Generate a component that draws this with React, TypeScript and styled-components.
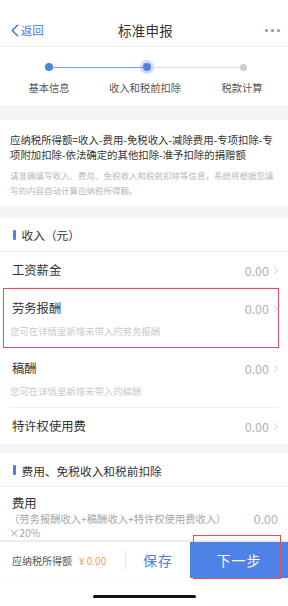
import React from 'react';
import styled, {createGlobalStyle} from 'styled-components';

const GlobalStyle = createGlobalStyle`
    html, body {
        margin: 0;
        padding: 0;
        background: #ffffff;
    }
    body {
        font-family: "Noto Sans CJK SC", "Noto Sans", sans-serif;
        color: #333333;
    }
`;

const BLUE = '#4f82e6';
const GRAY_BG = '#f4f5f7';

const Page = styled.div`
    width: 288px;
    height: 606px;
    display: flex;
    flex-direction: column;
    overflow: hidden;
    background: #ffffff;
`;

const Scroll = styled.div`
    flex: 1;
    overflow: hidden;
    background: ${GRAY_BG};
    display: flex;
    flex-direction: column;
`;

const Header = styled.div`
    background: #ffffff;
    padding-top: 14px;
`;

const NavBar = styled.div`
    height: 32px;
    display: grid;
    grid-template-columns: 1fr auto 1fr;
    align-items: center;
    border-bottom: 1px solid #ececec;
    padding: 0 8px 0 11px;
`;

const BackLink = styled.div`
    display: flex;
    align-items: center;
    gap: 2px;
    color: #3d7be0;
    font-size: 11.5px;
`;

const Title = styled.div`
    font-size: 13.5px;
    color: #333333;
    letter-spacing: 0.3px;
`;

const MoreDots = styled.div`
    justify-self: end;
    display: flex;
    gap: 3px;

    & span {
        width: 3px;
        height: 3px;
        border-radius: 50%;
        background: #7d95c9;
    }
`;

const Steps = styled.div`
    background: #ffffff;
    padding: 16px 0 10px;
`;

const Track = styled.div`
    display: flex;
    align-items: center;
    padding: 0 41px 0 45px;
`;

const Dot = styled.span<{$state: 'done' | 'current' | 'todo'}>`
    width: ${(p) => (p.$state === 'todo' ? 7 : 8)}px;
    height: ${(p) => (p.$state === 'todo' ? 7 : 8)}px;
    border-radius: 50%;
    flex: none;
    background: ${(p) => (p.$state === 'todo' ? '#c9cbd1' : BLUE)};
    box-shadow: ${(p) => (p.$state === 'current' ? '0 0 0 3px rgba(79, 130, 230, 0.28)' : 'none')};
`;

const Line = styled.span<{$active: boolean}>`
    flex: 1;
    height: 1px;
    background: ${(p) => (p.$active ? '#7ea3ea' : '#dcdde2')};
`;

const StepLabels = styled.div`
    display: grid;
    grid-template-columns: 96px 96px 98px;
    padding-left: 1px;
    margin-top: 10px;
`;

const StepLabel = styled.div`
    text-align: center;
    font-size: 10.3px;
    line-height: 14px;
    color: #555555;
`;

const Formula = styled.div`
    background: #ffffff;
    margin-top: 15px;
    padding: 12px 10px 8px;
`;

const FormulaText = styled.div`
    font-size: 10.4px;
    line-height: 15px;
    color: #333333;
`;

const FormulaHint = styled.div`
    margin-top: 6px;
    font-size: 8.5px;
    line-height: 15px;
    color: #b8b8b8;
`;

const Section = styled.div<{$gap: number}>`
    background: #ffffff;
    margin-top: ${(p) => p.$gap}px;
`;

const SectionTitle = styled.div<{$height: number}>`
    box-sizing: border-box;
    height: ${(p) => p.$height}px;
    display: flex;
    align-items: center;
    gap: 6px;
    padding-left: 13px;
    border-bottom: 1px solid #efefef;
    font-size: 11.7px;
    color: #333333;

    &::before {
        content: '';
        width: 2.5px;
        height: 10px;
        border-radius: 1px;
        background: ${BLUE};
    }
`;

const Row = styled.div<{$highlight?: boolean; $last?: boolean}>`
    position: relative;
    padding: 0 10px 0 12px;
    min-height: 36px;
    display: flex;
    flex-direction: column;
    justify-content: center;

    &::before {
        content: '';
        position: absolute;
        left: 10px;
        right: 10px;
        bottom: 0;
        height: 1px;
        background: ${(p) => (p.$last ? 'transparent' : '#efefef')};
    }

    &::after {
        content: '';
        display: ${(p) => (p.$highlight ? 'block' : 'none')};
        position: absolute;
        left: 3px;
        right: 9px;
        top: 0;
        bottom: 0;
        border: 1px solid #e0505c;
    }
`;

const RowWithHint = styled(Row)`
    padding-top: 11px;
    padding-bottom: 10px;
`;

const RowLine = styled.div`
    display: flex;
    align-items: center;
    justify-content: space-between;
    height: 18px;
`;

const RowLabel = styled.span`
    font-size: 12.3px;
    color: #333333;
`;

const RowValue = styled.span`
    display: flex;
    align-items: center;
    gap: 5px;
    font-size: 12.5px;
    color: #b3b3b3;
`;

const RowHint = styled.div`
    margin-top: 7px;
    font-size: 9.4px;
    line-height: 14px;
    color: #cacaca;
    margin-left: -2px;
`;

const CostRow = styled.div`
    padding: 7px 10px 0 12px;
`;

const CostBody = styled.div`
    display: flex;
    align-items: flex-start;
    justify-content: space-between;
    margin-left: -3px;
`;

const CostFormula = styled.div`
    width: 222px;
    font-size: 10.3px;
    line-height: 14px;
    color: #a6a6a6;
`;

const CostValue = styled.span`
    font-size: 12.5px;
    line-height: 14px;
    color: #b3b3b3;
`;

const BottomBar = styled.div`
    position: relative;
    z-index: 1;
    height: 36px;
    flex: none;
    display: flex;
    align-items: stretch;
    background: #ffffff;
    box-shadow: 0 -1px 3px rgba(0, 0, 0, 0.08);
`;

const Taxable = styled.div`
    width: 113px;
    padding-left: 12px;
    display: flex;
    align-items: center;
    gap: 7px;
    font-size: 10px;
    color: #555555;

    & b {
        font-weight: normal;
        color: #f0a04a;
    }
`;

const Divider = styled.span`
    width: 1px;
    height: 20px;
    align-self: center;
    background: #e6e6e6;
`;

const SaveButton = styled.div`
    flex: 1;
    display: flex;
    align-items: center;
    justify-content: center;
    font-size: 14px;
    color: #4a80d8;
    letter-spacing: 1px;
`;

const NextButton = styled.div`
    position: relative;
    width: 98px;
    display: flex;
    align-items: center;
    justify-content: center;
    background: ${BLUE};
    color: #ffffff;
    font-size: 14px;
    letter-spacing: 1px;

    &::after {
        content: '';
        position: absolute;
        left: 3px;
        right: 7px;
        top: -7px;
        bottom: -1px;
        border: 1px solid #e0505c;
    }
`;

const HomeArea = styled.div`
    height: 28px;
    flex: none;
    display: flex;
    justify-content: center;
    padding-top: 17px;
    box-sizing: border-box;
    background: #ffffff;

    &::after {
        content: '';
        width: 103px;
        height: 3px;
        border-radius: 2px;
        background: #111111;
    }
`;

const Chevron = ({color, size}: {color: string; size: number}) => (
    <svg width={size * 0.6} height={size} viewBox='0 0 6 10' fill='none'>
        <path d='M5 1 L1 5 L5 9' stroke={color} strokeWidth='1.2' strokeLinecap='round' strokeLinejoin='round'/>
    </svg>
);

const ChevronRight = () => (
    <svg width='4' height='7' viewBox='0 0 4 7' fill='none'>
        <path d='M0.6 0.6 L3.3 3.5 L0.6 6.4' stroke='#c4c4c4' strokeWidth='0.9' strokeLinecap='round' strokeLinejoin='round'/>
    </svg>
);

interface Income {
    label: string;
    hint?: string;
    highlight?: boolean;
}

const incomes: Income[] = [
    {label: '工资薪金'},
    {label: '劳务报酬', hint: '您可在详情里新增未带入的劳务报酬', highlight: true},
    {label: '稿酬', hint: '您可在详情里新增未带入的稿酬'},
    {label: '特许权使用费'},
];

const App = () => {
    return (
        <>
            <GlobalStyle/>
            <Page>
                <Scroll>
                    <Header>
                        <NavBar>
                            <BackLink>
                                <Chevron color='#3d7be0' size={13}/>
                                <span>{'返回'}</span>
                            </BackLink>
                            <Title>{'标准申报'}</Title>
                            <MoreDots>
                                <span/>
                                <span/>
                                <span/>
                            </MoreDots>
                        </NavBar>
                    </Header>

                    <Steps>
                        <Track>
                            <Dot $state='done'/>
                            <Line $active={true}/>
                            <Dot $state='current'/>
                            <Line $active={false}/>
                            <Dot $state='todo'/>
                        </Track>
                        <StepLabels>
                            <StepLabel>{'基本信息'}</StepLabel>
                            <StepLabel>{'收入和税前扣除'}</StepLabel>
                            <StepLabel>{'税款计算'}</StepLabel>
                        </StepLabels>
                    </Steps>

                    <Formula>
                        <FormulaText>
                            {'应纳税所得额=收入-费用-免税收入-减除费用-专项扣除-专项附加扣除-依法确定的其他扣除-准予扣除的捐赠额'}
                        </FormulaText>
                        <FormulaHint>
                            {'请准确填写收入、费用、免税收入和税前扣除等信息，系统将根据您填写的内容自动计算应纳税所得额。'}
                        </FormulaHint>
                    </Formula>

                    <Section $gap={12}>
                        <SectionTitle $height={34}>{'收入（元）'}</SectionTitle>
                        {incomes.map((item, idx) => {
                            const last = idx === incomes.length - 1;
                            const line = (
                                <RowLine>
                                    <RowLabel>{item.label}</RowLabel>
                                    <RowValue>
                                        {'0.00'}
                                        <ChevronRight/>
                                    </RowValue>
                                </RowLine>
                            );
                            if (item.hint) {
                                return (
                                    <RowWithHint
                                        key={item.label}
                                        $highlight={item.highlight}
                                        $last={last}
                                    >
                                        {line}
                                        <RowHint>{item.hint}</RowHint>
                                    </RowWithHint>
                                );
                            }
                            return (
                                <Row
                                    key={item.label}
                                    $last={last}
                                >
                                    {line}
                                </Row>
                            );
                        })}
                    </Section>

                    <Section $gap={10}>
                        <SectionTitle $height={33}>{'费用、免税收入和税前扣除'}</SectionTitle>
                        <CostRow>
                            <RowLine>
                                <RowLabel>{'费用'}</RowLabel>
                            </RowLine>
                            <CostBody>
                                <CostFormula>{'（劳务报酬收入+稿酬收入+特许权使用费收入）×20%'}</CostFormula>
                                <CostValue>{'0.00'}</CostValue>
                            </CostBody>
                        </CostRow>
                    </Section>
                </Scroll>

                <BottomBar>
                    <Taxable>
                        <span>{'应纳税所得额'}</span>
                        <b>{'¥ 0.00'}</b>
                    </Taxable>
                    <Divider/>
                    <SaveButton>{'保存'}</SaveButton>
                    <NextButton>{'下一步'}</NextButton>
                </BottomBar>
                <HomeArea/>
            </Page>
        </>
    );
};

export default App;
